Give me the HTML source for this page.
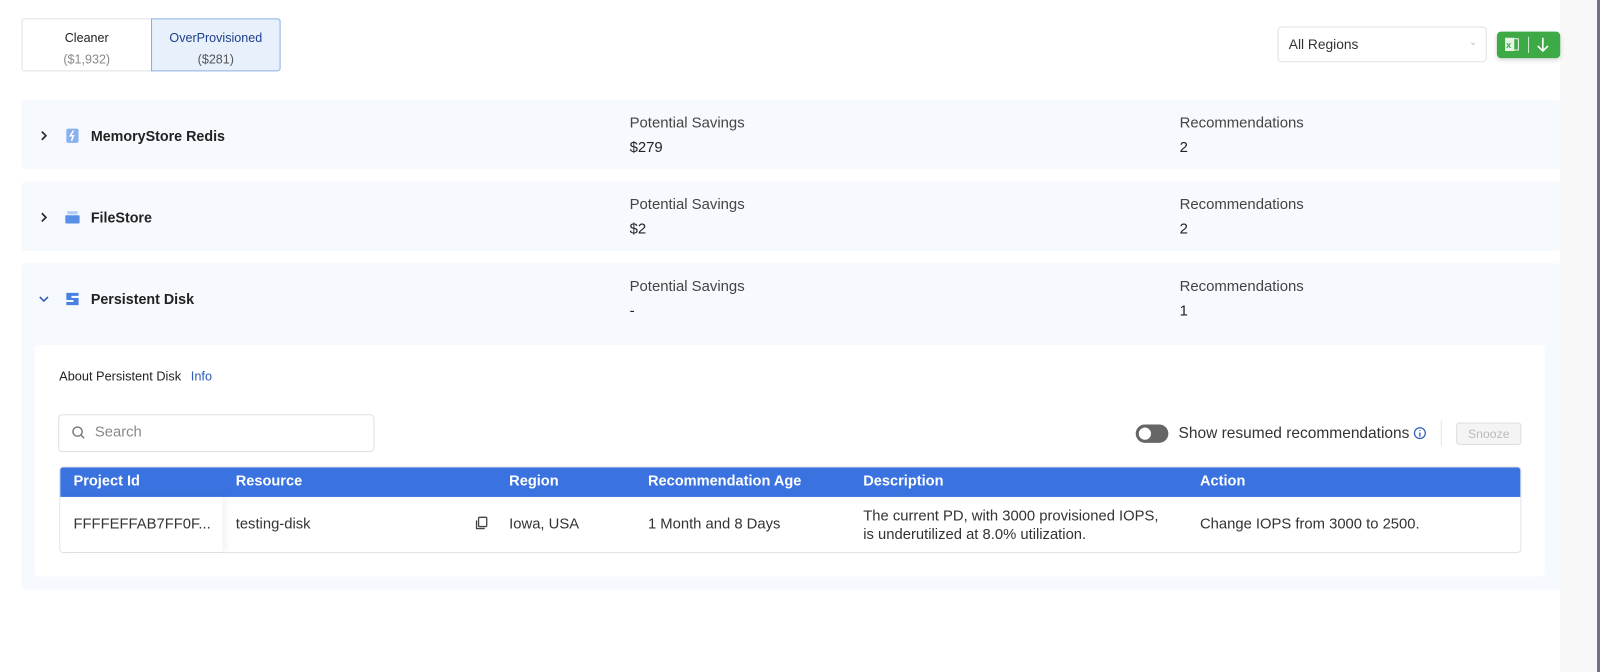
<!DOCTYPE html>
<html><head><style>
*{box-sizing:border-box;margin:0;padding:0}
body{width:1600px;height:672px;background:#fff;font-family:"Liberation Sans",sans-serif;color:#222;position:relative;overflow:hidden}
.a{position:absolute}
#w{position:absolute;left:0;top:0;width:1568px;height:659px;transform:scale(1.0204);transform-origin:0 0}
.tab{position:absolute;top:18px;height:52px;text-align:center;font-size:12.3px;padding-top:8px;line-height:21px}
.row{position:absolute;left:21px;width:1508px;background:#f6f9fd;border-radius:4px}
.lbl{position:absolute;font-size:14.6px;color:#444}
.val{position:absolute;font-size:14.6px;color:#222}
.name{position:absolute;left:89px;font-size:14px;font-weight:bold;color:#222}
.th{position:absolute;top:464px;font-size:14.3px;font-weight:bold;color:#fff}
.td{position:absolute;font-size:14.5px;color:#333}
</style></head><body>
<div class="a" style="left:1560px;top:0;width:37px;height:672px;background:#f7f8f7"></div>
<div class="a" style="left:1597px;top:0;width:3px;height:672px;background:#707480"></div>
<div id="w">
<div class="tab" style="left:21px;width:128px;border:1px solid #dde0e4;border-radius:3px 0 0 3px;color:#222">Cleaner<br><span style="color:#888">($1,932)</span></div>
<div class="tab" style="left:148px;width:127px;border:1px solid #8aaee0;background:#e8f0fc;border-radius:0 3px 3px 0;color:#1e3f8a">OverProvisioned<br><span style="color:#555">($281)</span></div>

<div class="a" style="left:1252px;top:26px;width:205px;height:35px;border:1px solid #dde0e4;border-radius:4px;font-size:13.5px;padding:9px 0 0 10px;color:#333">All Regions<span style="position:absolute;right:8px;top:9px;color:#bbb;font-size:10px">&#8964;</span></div>
<div class="a" style="left:1467px;top:31px;width:62px;height:26px;background:#3daa46;border-radius:4px;box-shadow:0 2px 4px rgba(0,0,0,.15)">
<svg width="62" height="26"><rect x="8" y="6" width="9" height="13" fill="#e8f4e8"/><rect x="13" y="7" width="8" height="11" fill="none" stroke="#e8f4e8"/><text x="9" y="16" font-size="9" font-family="Liberation Sans" fill="#3daa46" font-weight="bold">x</text><line x1="31" y1="5" x2="31" y2="21" stroke="#d0ecd2"/><path d="M45 6v13M40 14l5 5 5-5" stroke="#fff" stroke-width="1.6" fill="none"/></svg></div>

<div class="row" style="top:98px;height:68px"></div>
<div class="row" style="top:178px;height:68px"></div>
<div class="row" style="top:258px;height:320px"></div>

<svg class="a" style="left:39px;top:128px" width="8" height="10"><path d="M2 1l4 4-4 4" stroke="#222" stroke-width="1.6" fill="none"/></svg>
<svg class="a" style="left:63px;top:125px" width="16" height="16"><rect x="2" y="1" width="12" height="14" rx="2" fill="#8ab0f0"/><path d="M9 3l-3 5h3l-2 5" stroke="#fff" fill="none" stroke-width="1.5"/></svg>
<div class="name" style="top:125px">MemoryStore Redis</div>
<svg class="a" style="left:39px;top:208px" width="8" height="10"><path d="M2 1l4 4-4 4" stroke="#222" stroke-width="1.6" fill="none"/></svg>
<svg class="a" style="left:63px;top:206px" width="16" height="14"><rect x="3" y="1" width="10" height="3" fill="#b0cbf5"/><rect x="1" y="5" width="14" height="8" rx="1" fill="#5a8fe8"/></svg>
<div class="name" style="top:205px">FileStore</div>
<svg class="a" style="left:38px;top:289px" width="10" height="8"><path d="M1 2l4 4 4-4" stroke="#2a5bb8" stroke-width="1.5" fill="none"/></svg>
<svg class="a" style="left:64px;top:285px" width="14" height="16"><path d="M1 2h12v3H6v2h7v7H1v-3h7V9H1z" fill="#4a80e0"/></svg>
<div class="name" style="top:285px">Persistent Disk</div>

<div class="lbl" style="left:617px;top:113px">Potential Savings</div><div class="val" style="left:617px;top:137px">$279</div>
<div class="lbl" style="left:1156px;top:113px">Recommendations</div><div class="val" style="left:1156px;top:137px">2</div>
<div class="lbl" style="left:617px;top:193px">Potential Savings</div><div class="val" style="left:617px;top:217px">$2</div>
<div class="lbl" style="left:1156px;top:193px">Recommendations</div><div class="val" style="left:1156px;top:217px">2</div>
<div class="lbl" style="left:617px;top:273px">Potential Savings</div><div class="val" style="left:617px;top:297px">-</div>
<div class="lbl" style="left:1156px;top:273px">Recommendations</div><div class="val" style="left:1156px;top:297px">1</div>

<div class="a" style="left:34px;top:338px;width:1480px;height:227px;background:#fff;border-radius:4px"></div>
<div class="a" style="left:58px;top:362px;font-size:12.5px;color:#222">About Persistent Disk <span style="color:#2a5bb8;margin-left:6px">Info</span></div>
<div class="a" style="left:57px;top:406px;width:310px;height:37px;border:1px solid #dde0e4;border-radius:4px"></div>
<svg class="a" style="left:70px;top:417px" width="14" height="14"><circle cx="6" cy="6" r="4.5" stroke="#777" stroke-width="1.4" fill="none"/><path d="M9.5 9.5l3 3" stroke="#777" stroke-width="1.4"/></svg>
<div class="a" style="left:93px;top:416px;font-size:14.5px;color:#888">Search</div>

<div class="a" style="left:1113px;top:416px;width:32px;height:18px;border-radius:9px;background:#666"></div>
<div class="a" style="left:1116px;top:419px;width:12px;height:12px;border-radius:6px;background:#fff"></div>
<div class="a" style="left:1155px;top:416px;font-size:15.2px;color:#333">Show resumed recommendations</div>
<svg class="a" style="left:1385px;top:418px" width="13" height="13"><circle cx="6.5" cy="6.5" r="5.3" stroke="#2a5bb8" stroke-width="1.2" fill="none"/><path d="M6.5 6v4M6.5 3.5v1" stroke="#2a5bb8" stroke-width="1.3"/></svg>
<div class="a" style="left:1412px;top:412px;width:1px;height:25px;background:#e3e3e3"></div>
<div class="a" style="left:1427px;top:414px;width:64px;height:22px;border:1px solid #ddd;background:#f4f4f4;border-radius:3px;font-size:12px;color:#bbb;text-align:center;line-height:20px">Snooze</div>

<div class="a" style="left:58px;top:457px;width:1433px;height:85px;border:1px solid #e0e3e8;border-radius:4px;overflow:hidden">
<div style="height:29px;background:#3a72e0"></div></div>
<div class="a" style="left:58px;top:486px;width:160px;height:55px;box-shadow:4px 0 6px rgba(0,0,0,.05)"></div>
<div class="th" style="left:72px">Project Id</div>
<div class="th" style="left:231px">Resource</div>
<div class="th" style="left:499px">Region</div>
<div class="th" style="left:635px">Recommendation Age</div>
<div class="th" style="left:846px">Description</div>
<div class="th" style="left:1176px">Action</div>
<div class="td" style="left:72px;top:506px">FFFFEFFAB7FF0F...</div>
<div class="td" style="left:231px;top:506px">testing-disk</div>
<svg class="a" style="left:465px;top:506px" width="14" height="14"><rect x="4" y="1" width="8" height="9" rx="1" stroke="#444" fill="none" stroke-width="1.3"/><path d="M2 4v8h8" stroke="#444" fill="none" stroke-width="1.3"/></svg>
<div class="td" style="left:499px;top:506px">Iowa, USA</div>
<div class="td" style="left:635px;top:506px">1 Month and 8 Days</div>
<div class="td" style="left:846px;top:497px;line-height:18px">The current PD, with 3000 provisioned IOPS,<br>is underutilized at 8.0% utilization.</div>
<div class="td" style="left:1176px;top:506px">Change IOPS from 3000 to 2500.</div>
</div>
</body></html>
